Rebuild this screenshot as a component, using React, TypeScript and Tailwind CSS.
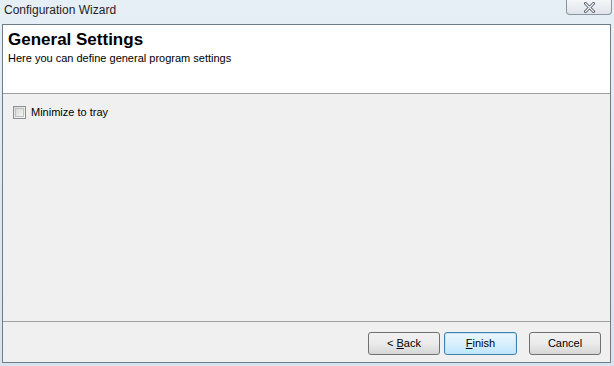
import React from "react";

export default function App() {
  const font = { fontFamily: '"Liberation Sans", Arial, sans-serif' };
  return (
    <div
      className="w-[614px] h-[366px] overflow-hidden flex flex-col bg-gradient-to-b from-[#e6eef6] to-[#d9e3ee] text-black"
      style={font}
    >
      <div className="h-[24px] flex items-start justify-between pl-[4px] pr-[2px]">
        <span className="text-[12px] leading-[20px] text-[#1e1e1e]">Configuration Wizard</span>
        <div className="w-[46px] h-[15px] rounded-b-[4px] border border-t-0 border-[#8a949e] bg-gradient-to-b from-[#f4f6f8] to-[#dfe4ea] flex items-center justify-center">
          <svg width="13" height="11" viewBox="0 0 13 11">
            <path d="M2.5 1.5 L10.5 9.5 M10.5 1.5 L2.5 9.5" stroke="#4f5864" strokeWidth="3" strokeLinecap="round" />
            <path d="M2.5 1.5 L10.5 9.5 M10.5 1.5 L2.5 9.5" stroke="#f6f7f9" strokeWidth="1.2" strokeLinecap="round" />
          </svg>
        </div>
      </div>
      <div className="ml-[2px] w-[609px] h-[339px] border border-[#6e7b88] flex flex-col">
        <div className="h-[69px] bg-white border-b border-[#a0a0a0] pl-[5px] pt-[4px]">
          <div className="text-[17px] font-bold leading-[21px]">General Settings</div>
          <div className="text-[11px] leading-[14px] mt-[1px]">Here you can define general program settings</div>
        </div>
        <div className="flex-1 bg-[#f0f0f0] border-b border-[#a0a0a0] pl-[10px] pt-[10px]">
          <label className="flex items-center gap-[5px] text-[11px]">
            <span className="w-[13px] h-[13px] border border-[#8e8f8f] bg-gradient-to-br from-[#dcdcdc] to-[#f8f8f8] flex items-center justify-center">
              <span className="w-[9px] h-[9px] border border-[#c0c0c0] bg-gradient-to-br from-[#d8d8d8] to-[#f4f4f4]" />
            </span>
            <span>Minimize to tray</span>
          </label>
        </div>
        <div className="h-[40px] bg-[#f0f0f0] flex items-start justify-end pt-[10px] pr-[9px] text-[11px]">
          <button className="w-[72px] h-[23px] rounded-[3px] border border-[#707070] bg-gradient-to-b from-[#f2f2f2] via-[#ebebeb] to-[#d6d6d6] flex items-center justify-center">
            &lt; <span className="underline ml-[3px]">B</span>ack
          </button>
          <button className="ml-[4px] w-[73px] h-[23px] rounded-[3px] border border-[#3c7fb1] bg-gradient-to-b from-[#eaf6fd] via-[#d9f0fc] to-[#bee6fd] shadow-[inset_0_0_0_1px_#c4e5f6] flex items-center justify-center">
            <span className="underline">F</span>inish
          </button>
          <button className="ml-[12px] w-[72px] h-[23px] rounded-[3px] border border-[#707070] bg-gradient-to-b from-[#f2f2f2] via-[#ebebeb] to-[#d6d6d6] flex items-center justify-center">
            Cancel
          </button>
        </div>
      </div>
    </div>
  );
}
